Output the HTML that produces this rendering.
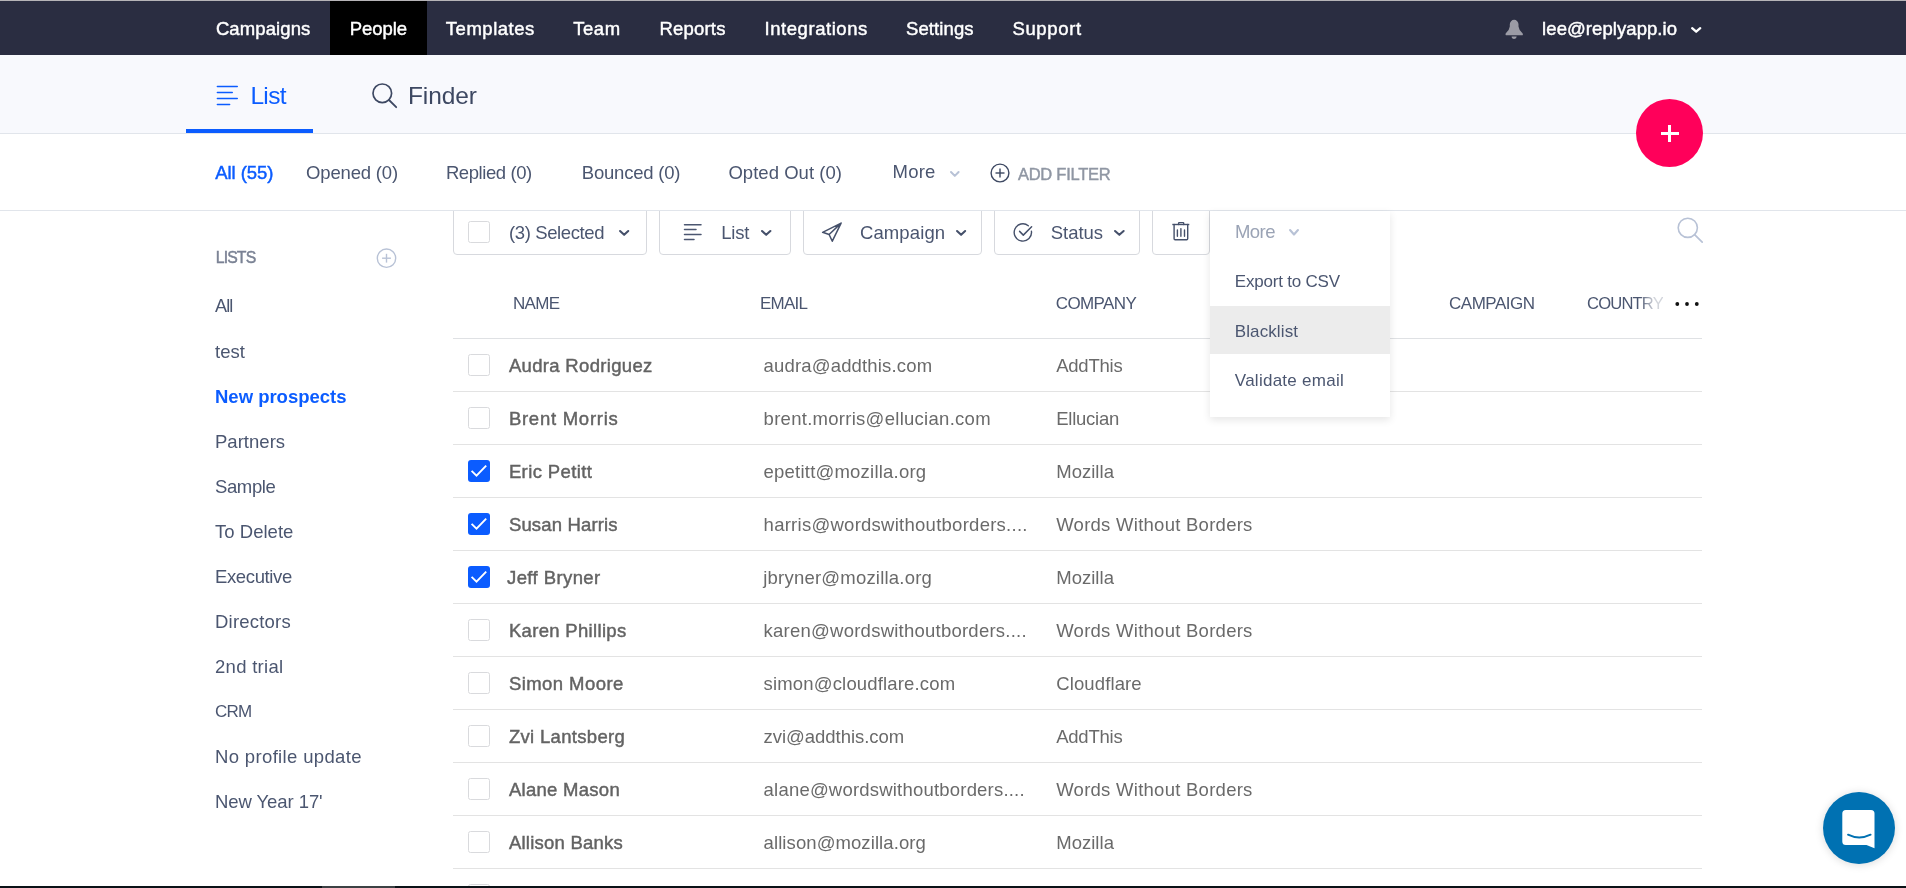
<!DOCTYPE html>
<html><head><meta charset="utf-8"><style>
html,body{margin:0;padding:0;width:1906px;height:888px;overflow:hidden;background:#fff;position:relative}
.a{position:absolute;box-sizing:content-box}
.t{position:absolute;white-space:pre;font-family:"Liberation Sans",sans-serif;line-height:normal}
#root{position:absolute;left:0;top:0;width:1906px;height:888px;overflow:hidden;will-change:transform}
</style></head><body><div id="root">
<div class="a" style="left:0;top:0;width:1906px;height:55px;background:#2a2d41"></div>
<div class="a" style="left:0;top:0;width:1906px;height:1px;background:#b6b4b7"></div>
<div class="a" style="left:330px;top:1px;width:97px;height:54px;background:#000"></div>
<svg class="a" style="left:1504px;top:19px" width="20" height="21" viewBox="0 0 20 21"><path d="M5.8 5.2A4.35 4.35 0 0 1 14.5 5.2L14.5 7.5Q14.8 11 18.5 14.3Q19.4 15.3 18.6 16.2L1.9 16.2Q1.0 15.3 1.8 14.3Q5.5 11 5.8 7.5Z" fill="#9b9ba5"/><path d="M7.6 17.6L12.7 17.6A2.55 2.4 0 0 1 7.6 17.6Z" fill="#9b9ba5"/></svg>
<svg class="a" style="left:1690.5px;top:26.8px;overflow:visible" width="10.4" height="6.3" viewBox="0 0 10.4 6.3"><polyline points="1.15,1.15 5.2,4.6899999999999995 9.25,1.15" fill="none" stroke="#ffffff" stroke-width="2.3" stroke-linecap="round" stroke-linejoin="round"/></svg>
<div class="a" style="left:0;top:55px;width:1906px;height:78px;background:#f8f9fd"></div>
<div class="a" style="left:0;top:133px;width:1906px;height:1px;background:#e1e5eb"></div>
<div class="a" style="left:186px;top:129px;width:127px;height:4px;background:#0b5cff"></div>
<svg class="a" style="left:216px;top:85px" width="23" height="21" viewBox="0 0 23 21"><g stroke="#0b5cff" stroke-width="1.5" stroke-linecap="round"><line x1="1.35" y1="1.5" x2="21.25" y2="1.5"/><line x1="1.35" y1="7.6" x2="16.25" y2="7.6"/><line x1="1.35" y1="13.5" x2="21.25" y2="13.5"/><line x1="1.35" y1="19.6" x2="13.65" y2="19.6"/></g></svg>
<svg class="a" style="left:371px;top:82px" width="27" height="27" viewBox="0 0 27 27"><circle cx="11.3" cy="11.3" r="9.3" fill="none" stroke="#3d4862" stroke-width="1.7"/><line x1="18" y1="18" x2="25.2" y2="25.2" stroke="#3d4862" stroke-width="1.8" stroke-linecap="round"/></svg>
<div class="a" style="left:0;top:210px;width:1906px;height:1px;background:#e1e5eb"></div>
<svg class="a" style="left:949.7px;top:171px;overflow:visible" width="9.6" height="6.3" viewBox="0 0 9.6 6.3"><polyline points="1.0,1.0 4.8,4.9 8.6,1.0" fill="none" stroke="#b8c2d6" stroke-width="2.0" stroke-linecap="round" stroke-linejoin="round"/></svg>
<svg class="a" style="left:990px;top:163px" width="20" height="20" viewBox="0 0 20 20"><circle cx="10" cy="10" r="8.9" fill="none" stroke="#3d4862" stroke-width="1.4"/><line x1="10" y1="5.5" x2="10" y2="14.5" stroke="#3d4862" stroke-width="1.4"/><line x1="5.5" y1="10" x2="14.5" y2="10" stroke="#3d4862" stroke-width="1.4"/></svg>
<div class="a" style="left:453px;top:210px;width:192px;height:43px;border:1px solid #d7d9de;border-radius:0 0 4px 4px;background:#fff"></div>
<div class="a" style="left:659px;top:210px;width:130px;height:43px;border:1px solid #d7d9de;border-radius:0 0 4px 4px;background:#fff"></div>
<div class="a" style="left:803px;top:210px;width:177px;height:43px;border:1px solid #d7d9de;border-radius:0 0 4px 4px;background:#fff"></div>
<div class="a" style="left:994px;top:210px;width:144px;height:43px;border:1px solid #d7d9de;border-radius:0 0 4px 4px;background:#fff"></div>
<div class="a" style="left:1152px;top:210px;width:56px;height:43px;border:1px solid #d7d9de;border-radius:0 0 4px 4px;background:#fff"></div>
<div class="a" style="left:0;top:210px;width:1906px;height:1px;background:#e1e5eb"></div>
<div class="a" style="left:468px;top:221px;width:20px;height:20px;border:1px solid #d9dadd;border-radius:2.5px;background:#fff"></div>
<svg class="a" style="left:619px;top:229.8px;overflow:visible" width="10.3" height="6.3" viewBox="0 0 10.3 6.3"><polyline points="1.05,1.05 5.15,4.83 9.25,1.05" fill="none" stroke="#45506a" stroke-width="2.1" stroke-linecap="round" stroke-linejoin="round"/></svg>
<svg class="a" style="left:683px;top:223px" width="20" height="19" viewBox="0 0 20 19"><g stroke="#4b5670" stroke-width="1.5" stroke-linecap="round"><line x1="1.5" y1="1.8" x2="18" y2="1.8"/><line x1="1.5" y1="6.4" x2="13" y2="6.4"/><line x1="1.5" y1="11.6" x2="18" y2="11.6"/><line x1="1.5" y1="16.4" x2="11" y2="16.4"/></g></svg>
<svg class="a" style="left:760.6px;top:229.8px;overflow:visible" width="10.4" height="6.3" viewBox="0 0 10.4 6.3"><polyline points="1.05,1.05 5.2,4.83 9.35,1.05" fill="none" stroke="#45506a" stroke-width="2.1" stroke-linecap="round" stroke-linejoin="round"/></svg>
<svg class="a" style="left:821px;top:221px" width="22" height="22" viewBox="0 0 22 22"><path d="M20.1 2.1 L1.6 11.3 L8.1 13.5 L11.3 20.2 Z M20.1 2.1 L8.1 13.5" fill="none" stroke="#45506a" stroke-width="1.5" stroke-linejoin="round" stroke-linecap="round"/></svg>
<svg class="a" style="left:956.4px;top:229.8px;overflow:visible" width="10.2" height="6.3" viewBox="0 0 10.2 6.3"><polyline points="1.05,1.05 5.1,4.83 9.149999999999999,1.05" fill="none" stroke="#45506a" stroke-width="2.1" stroke-linecap="round" stroke-linejoin="round"/></svg>
<svg class="a" style="left:1012px;top:221px" width="22" height="22" viewBox="0 0 22 22"><path d="M19.42 10.25 A8.65 8.65 0 1 1 16.32 4.75" fill="none" stroke="#45506a" stroke-width="1.4" stroke-linecap="round"/><polyline points="7.6,10.4 11.3,14.1 19.6,5.8" fill="none" stroke="#45506a" stroke-width="1.5" stroke-linecap="round" stroke-linejoin="round"/></svg>
<svg class="a" style="left:1114.3px;top:229.8px;overflow:visible" width="10.7" height="6.3" viewBox="0 0 10.7 6.3"><polyline points="1.05,1.05 5.35,4.83 9.649999999999999,1.05" fill="none" stroke="#45506a" stroke-width="2.1" stroke-linecap="round" stroke-linejoin="round"/></svg>
<svg class="a" style="left:1171px;top:221px" width="19" height="21" viewBox="0 0 19 21"><g fill="none" stroke="#45506a" stroke-width="1.4" stroke-linecap="round"><path d="M1.3 3.5h17" stroke-linecap="butt"/><path d="M7.6 3.5V2.2q0-.6.6-.6h3.9q.6 0 .6.6v1.3"/><path d="M3.1 3.5v14.2q0 1 1 1h11.6q1 0 1-1V3.5"/><path d="M6.4 9v6.3M9.9 7.6v7.7M13.5 9v6.3"/></g></svg>
<svg class="a" style="left:1677px;top:217px" width="27" height="27" viewBox="0 0 27 27"><circle cx="10.8" cy="10.8" r="9.6" fill="none" stroke="#b8c2d6" stroke-width="1.6"/><line x1="17.6" y1="17.6" x2="25.2" y2="25.2" stroke="#b8c2d6" stroke-width="1.7" stroke-linecap="round"/></svg>
<div class="a" style="left:453px;top:338px;width:1249px;height:1px;background:#dfe1e4"></div>
<div class="a" style="left:453px;top:391px;width:1249px;height:1px;background:#e3e3e3"></div>
<div class="a" style="left:453px;top:444px;width:1249px;height:1px;background:#e3e3e3"></div>
<div class="a" style="left:453px;top:497px;width:1249px;height:1px;background:#e3e3e3"></div>
<div class="a" style="left:453px;top:550px;width:1249px;height:1px;background:#e3e3e3"></div>
<div class="a" style="left:453px;top:603px;width:1249px;height:1px;background:#e3e3e3"></div>
<div class="a" style="left:453px;top:656px;width:1249px;height:1px;background:#e3e3e3"></div>
<div class="a" style="left:453px;top:709px;width:1249px;height:1px;background:#e3e3e3"></div>
<div class="a" style="left:453px;top:762px;width:1249px;height:1px;background:#e3e3e3"></div>
<div class="a" style="left:453px;top:815px;width:1249px;height:1px;background:#e3e3e3"></div>
<div class="a" style="left:453px;top:868px;width:1249px;height:1px;background:#e3e3e3"></div>
<div class="a" style="left:468px;top:354px;width:20px;height:20px;border:1px solid #d9dadd;border-radius:2.5px;background:#fff"></div>
<div class="a" style="left:468px;top:407px;width:20px;height:20px;border:1px solid #d9dadd;border-radius:2.5px;background:#fff"></div>
<div class="a" style="left:468px;top:460px;width:22px;height:22px;border-radius:3px;background:#0b5cff"></div><svg class="a" style="left:468px;top:460px" width="22" height="22" viewBox="0 0 22 22"><polyline points="3.6,10.9 8.5,15.6 18.2,5.7" fill="none" stroke="#fff" stroke-width="1.9" stroke-linecap="butt" stroke-linejoin="miter"/></svg>
<div class="a" style="left:468px;top:513px;width:22px;height:22px;border-radius:3px;background:#0b5cff"></div><svg class="a" style="left:468px;top:513px" width="22" height="22" viewBox="0 0 22 22"><polyline points="3.6,10.9 8.5,15.6 18.2,5.7" fill="none" stroke="#fff" stroke-width="1.9" stroke-linecap="butt" stroke-linejoin="miter"/></svg>
<div class="a" style="left:468px;top:566px;width:22px;height:22px;border-radius:3px;background:#0b5cff"></div><svg class="a" style="left:468px;top:566px" width="22" height="22" viewBox="0 0 22 22"><polyline points="3.6,10.9 8.5,15.6 18.2,5.7" fill="none" stroke="#fff" stroke-width="1.9" stroke-linecap="butt" stroke-linejoin="miter"/></svg>
<div class="a" style="left:468px;top:619px;width:20px;height:20px;border:1px solid #d9dadd;border-radius:2.5px;background:#fff"></div>
<div class="a" style="left:468px;top:672px;width:20px;height:20px;border:1px solid #d9dadd;border-radius:2.5px;background:#fff"></div>
<div class="a" style="left:468px;top:725px;width:20px;height:20px;border:1px solid #d9dadd;border-radius:2.5px;background:#fff"></div>
<div class="a" style="left:468px;top:778px;width:20px;height:20px;border:1px solid #d9dadd;border-radius:2.5px;background:#fff"></div>
<div class="a" style="left:468px;top:831px;width:20px;height:20px;border:1px solid #d9dadd;border-radius:2.5px;background:#fff"></div>
<div class="a" style="left:468px;top:884px;width:20px;height:20px;border:1px solid #d9dadd;border-radius:2.5px;background:#fff"></div>
<svg class="a" style="left:1673.8px;top:300.3px" width="28" height="8" viewBox="0 0 28 8"><circle cx="3.3" cy="4" r="1.9" fill="#111"/><circle cx="13" cy="4" r="1.9" fill="#111"/><circle cx="22.8" cy="4" r="1.9" fill="#111"/></svg>
<svg class="a" style="left:376px;top:248px" width="21" height="21" viewBox="0 0 21 21"><circle cx="10.5" cy="10.2" r="9.2" fill="none" stroke="#b8c2d6" stroke-width="1.4"/><line x1="10.5" y1="5.8" x2="10.5" y2="14.6" stroke="#b8c2d6" stroke-width="1.4"/><line x1="6.1" y1="10.2" x2="14.9" y2="10.2" stroke="#b8c2d6" stroke-width="1.4"/></svg>
<div class="a" style="left:1210px;top:211px;width:180px;height:206px;background:#fff;box-shadow:0 3px 8px rgba(0,0,0,.10)"></div>
<div class="a" style="left:1210px;top:306px;width:180px;height:48px;background:#ececec"></div>
<svg class="a" style="left:1289px;top:229.2px;overflow:visible" width="10" height="7" viewBox="0 0 10 7"><polyline points="1.05,1.05 5.0,5.53 8.95,1.05" fill="none" stroke="#b8c2d6" stroke-width="2.1" stroke-linecap="round" stroke-linejoin="round"/></svg>
<div class="a" style="left:1636px;top:99px;width:67px;height:68px;border-radius:50%;background:#ff005a"></div>
<div class="a" style="left:1660.5px;top:132px;width:18px;height:3px;background:#fff"></div>
<div class="a" style="left:1668px;top:125px;width:3px;height:17px;background:#fff"></div>
<div class="a" style="left:1823px;top:792px;width:72px;height:72px;border-radius:50%;background:#0071b2;box-shadow:0 1px 8px rgba(0,0,0,.15)"></div>
<svg class="a" style="left:1841px;top:809px" width="36" height="40" viewBox="0 0 36 40"><path d="M4.8 1h25.2a3.5 3.5 0 0 1 3.5 3.5V39.2l-8-3.2H4.8A3.5 3.5 0 0 1 1.3 32.5v-28A3.5 3.5 0 0 1 4.8 1z" fill="#fff"/><path d="M7 25.7q11.2 5.6 22.6 0" fill="none" stroke="#0071b2" stroke-width="1.9" stroke-linecap="round"/></svg>
<div class="a" style="left:0;top:886px;width:1906px;height:2px;background:#0b1217"></div>
<div class="a" style="left:322px;top:886px;width:73px;height:2px;background:#3c4144"></div>
<div class="t" style="left:215.90px;top:18.46px;font-size:18.5px;color:#ffffff;font-weight:normal;letter-spacing:0.111px;-webkit-text-stroke:0.45px #ffffff;">Campaigns</div>
<div class="t" style="left:349.70px;top:18.46px;font-size:18.5px;color:#ffffff;font-weight:normal;letter-spacing:-0.065px;-webkit-text-stroke:0.45px #ffffff;">People</div>
<div class="t" style="left:445.80px;top:18.46px;font-size:18.5px;color:#ffffff;font-weight:normal;letter-spacing:0.530px;-webkit-text-stroke:0.45px #ffffff;">Templates</div>
<div class="t" style="left:573.20px;top:18.46px;font-size:18.5px;color:#ffffff;font-weight:normal;letter-spacing:0.556px;-webkit-text-stroke:0.45px #ffffff;">Team</div>
<div class="t" style="left:659.40px;top:18.46px;font-size:18.5px;color:#ffffff;font-weight:normal;letter-spacing:0.208px;-webkit-text-stroke:0.45px #ffffff;">Reports</div>
<div class="t" style="left:764.50px;top:18.46px;font-size:18.5px;color:#ffffff;font-weight:normal;letter-spacing:0.558px;-webkit-text-stroke:0.45px #ffffff;">Integrations</div>
<div class="t" style="left:906.00px;top:18.46px;font-size:18.5px;color:#ffffff;font-weight:normal;letter-spacing:0.103px;-webkit-text-stroke:0.45px #ffffff;">Settings</div>
<div class="t" style="left:1012.40px;top:18.46px;font-size:18.5px;color:#ffffff;font-weight:normal;letter-spacing:0.676px;-webkit-text-stroke:0.45px #ffffff;">Support</div>
<div class="t" style="left:1542.10px;top:18.46px;font-size:18.5px;color:#ffffff;font-weight:normal;letter-spacing:0.069px;-webkit-text-stroke:0.45px #ffffff;">lee@replyapp.io</div>
<div class="t" style="left:250.40px;top:82.03px;font-size:24.5px;color:#0b5cff;font-weight:normal;letter-spacing:-0.666px;">List</div>
<div class="t" style="left:408.00px;top:82.03px;font-size:24.5px;color:#3d4862;font-weight:normal;letter-spacing:-0.131px;">Finder</div>
<div class="t" style="left:215.30px;top:161.56px;font-size:18.5px;color:#0b5cff;font-weight:normal;letter-spacing:-0.064px;-webkit-text-stroke:0.45px #0b5cff;">All (55)</div>
<div class="t" style="left:306.10px;top:161.56px;font-size:18.5px;color:#4b5670;font-weight:normal;letter-spacing:-0.179px;">Opened (0)</div>
<div class="t" style="left:445.90px;top:161.56px;font-size:18.5px;color:#4b5670;font-weight:normal;letter-spacing:-0.417px;">Replied (0)</div>
<div class="t" style="left:581.80px;top:161.56px;font-size:18.5px;color:#4b5670;font-weight:normal;letter-spacing:-0.212px;">Bounced (0)</div>
<div class="t" style="left:728.40px;top:161.56px;font-size:18.5px;color:#4b5670;font-weight:normal;letter-spacing:0.039px;">Opted Out (0)</div>
<div class="t" style="left:892.60px;top:161.26px;font-size:18.5px;color:#4b5670;font-weight:normal;letter-spacing:0.207px;">More</div>
<div class="t" style="left:1017.90px;top:164.77px;font-size:16.5px;color:#8f96a3;font-weight:normal;letter-spacing:-0.238px;-webkit-text-stroke:0.45px #8f96a3;">ADD FILTER</div>
<div class="t" style="left:509.00px;top:221.56px;font-size:18.5px;color:#4b5670;font-weight:normal;letter-spacing:-0.392px;">(3) Selected</div>
<div class="t" style="left:721.30px;top:221.56px;font-size:18.5px;color:#4b5670;font-weight:normal;letter-spacing:-0.256px;">List</div>
<div class="t" style="left:859.90px;top:221.56px;font-size:18.5px;color:#4b5670;font-weight:normal;letter-spacing:0.134px;">Campaign</div>
<div class="t" style="left:1050.70px;top:221.56px;font-size:18.5px;color:#4b5670;font-weight:normal;letter-spacing:-0.010px;">Status</div>
<div class="t" style="left:1234.90px;top:220.96px;font-size:18.5px;color:#9aa3b5;font-weight:normal;letter-spacing:-0.527px;">More</div>
<div class="t" style="left:1234.80px;top:271.62px;font-size:17px;color:#4b5670;font-weight:normal;letter-spacing:-0.208px;">Export to CSV</div>
<div class="t" style="left:1234.80px;top:321.92px;font-size:17px;color:#4b5670;font-weight:normal;letter-spacing:0.101px;">Blacklist</div>
<div class="t" style="left:1234.80px;top:371.01px;font-size:17px;color:#4b5670;font-weight:normal;letter-spacing:0.263px;">Validate email</div>
<div class="t" style="left:513.00px;top:294.01px;font-size:17px;color:#4b5670;font-weight:normal;letter-spacing:-0.710px;">NAME</div>
<div class="t" style="left:760.00px;top:294.01px;font-size:17px;color:#4b5670;font-weight:normal;letter-spacing:-0.775px;">EMAIL</div>
<div class="t" style="left:1055.80px;top:294.01px;font-size:17px;color:#4b5670;font-weight:normal;letter-spacing:-0.627px;">COMPANY</div>
<div class="t" style="left:1449.00px;top:294.01px;font-size:17px;color:#4b5670;font-weight:normal;letter-spacing:-0.489px;">CAMPAIGN</div>
<div class="t" style="left:1587.00px;top:294.38px;font-size:16.599999999999994px;color:#4b5670;font-weight:normal;letter-spacing:-0.826px;-webkit-mask-image:linear-gradient(90deg,#000 70%,rgba(0,0,0,.25) 88%);">COUNTRY</div>
<div class="t" style="left:215.80px;top:248.70px;font-size:15.8px;color:#7a8294;font-weight:normal;letter-spacing:-0.881px;-webkit-text-stroke:0.45px #7a8294;">LISTS</div>
<div class="t" style="left:215.00px;top:295.92px;font-size:18.099999999999994px;color:#4b5670;font-weight:normal;letter-spacing:-0.895px;">All</div>
<div class="t" style="left:215.00px;top:340.56px;font-size:18.5px;color:#4b5670;font-weight:normal;letter-spacing:0.038px;">test</div>
<div class="t" style="left:215.00px;top:385.56px;font-size:18.5px;color:#0b5cff;font-weight:bold;letter-spacing:-0.011px;">New prospects</div>
<div class="t" style="left:215.00px;top:430.56px;font-size:18.5px;color:#4b5670;font-weight:normal;letter-spacing:0.024px;">Partners</div>
<div class="t" style="left:215.00px;top:475.56px;font-size:18.5px;color:#4b5670;font-weight:normal;letter-spacing:-0.383px;">Sample</div>
<div class="t" style="left:215.00px;top:520.56px;font-size:18.5px;color:#4b5670;font-weight:normal;letter-spacing:0.030px;">To Delete</div>
<div class="t" style="left:215.00px;top:565.56px;font-size:18.5px;color:#4b5670;font-weight:normal;letter-spacing:-0.375px;">Executive</div>
<div class="t" style="left:215.00px;top:610.56px;font-size:18.5px;color:#4b5670;font-weight:normal;letter-spacing:0.212px;">Directors</div>
<div class="t" style="left:215.00px;top:655.56px;font-size:18.5px;color:#4b5670;font-weight:normal;letter-spacing:0.280px;">2nd trial</div>
<div class="t" style="left:215.00px;top:701.91px;font-size:16.99999999999998px;color:#4b5670;font-weight:normal;letter-spacing:-0.787px;">CRM</div>
<div class="t" style="left:215.00px;top:745.56px;font-size:18.5px;color:#4b5670;font-weight:normal;letter-spacing:0.351px;">No profile update</div>
<div class="t" style="left:215.00px;top:790.56px;font-size:18.5px;color:#4b5670;font-weight:normal;letter-spacing:-0.074px;">New Year 17'</div>
<div class="t" style="left:508.90px;top:355.16px;font-size:18.5px;color:#636363;font-weight:normal;letter-spacing:0.326px;-webkit-text-stroke:0.45px #636363;">Audra Rodriguez</div>
<div class="t" style="left:763.60px;top:355.16px;font-size:18.5px;color:#6a6a6a;font-weight:normal;letter-spacing:0.165px;">audra@addthis.com</div>
<div class="t" style="left:1056.20px;top:355.16px;font-size:18.5px;color:#6a6a6a;font-weight:normal;letter-spacing:-0.232px;">AddThis</div>
<div class="t" style="left:508.90px;top:408.16px;font-size:18.5px;color:#636363;font-weight:normal;letter-spacing:0.742px;-webkit-text-stroke:0.45px #636363;">Brent Morris</div>
<div class="t" style="left:763.60px;top:408.16px;font-size:18.5px;color:#6a6a6a;font-weight:normal;letter-spacing:0.278px;">brent.morris@ellucian.com</div>
<div class="t" style="left:1056.20px;top:408.16px;font-size:18.5px;color:#6a6a6a;font-weight:normal;letter-spacing:-0.250px;">Ellucian</div>
<div class="t" style="left:508.90px;top:461.16px;font-size:18.5px;color:#636363;font-weight:normal;letter-spacing:0.392px;-webkit-text-stroke:0.45px #636363;">Eric Petitt</div>
<div class="t" style="left:763.60px;top:461.16px;font-size:18.5px;color:#6a6a6a;font-weight:normal;letter-spacing:0.215px;">epetitt@mozilla.org</div>
<div class="t" style="left:1056.20px;top:461.16px;font-size:18.5px;color:#6a6a6a;font-weight:normal;letter-spacing:0.029px;">Mozilla</div>
<div class="t" style="left:508.90px;top:514.16px;font-size:18.5px;color:#636363;font-weight:normal;letter-spacing:0.161px;-webkit-text-stroke:0.45px #636363;">Susan Harris</div>
<div class="t" style="left:763.60px;top:514.16px;font-size:18.5px;color:#6a6a6a;font-weight:normal;letter-spacing:0.261px;">harris@wordswithoutborders....</div>
<div class="t" style="left:1056.20px;top:514.16px;font-size:18.5px;color:#6a6a6a;font-weight:normal;letter-spacing:0.264px;">Words Without Borders</div>
<div class="t" style="left:507.00px;top:567.16px;font-size:18.5px;color:#636363;font-weight:normal;letter-spacing:0.412px;-webkit-text-stroke:0.45px #636363;">Jeff Bryner</div>
<div class="t" style="left:763.26px;top:567.16px;font-size:18.5px;color:#6a6a6a;font-weight:normal;letter-spacing:0.211px;">jbryner@mozilla.org</div>
<div class="t" style="left:1056.20px;top:567.16px;font-size:18.5px;color:#6a6a6a;font-weight:normal;letter-spacing:0.029px;">Mozilla</div>
<div class="t" style="left:508.90px;top:620.16px;font-size:18.5px;color:#636363;font-weight:normal;letter-spacing:0.321px;-webkit-text-stroke:0.45px #636363;">Karen Phillips</div>
<div class="t" style="left:763.60px;top:620.16px;font-size:18.5px;color:#6a6a6a;font-weight:normal;letter-spacing:0.239px;">karen@wordswithoutborders....</div>
<div class="t" style="left:1056.20px;top:620.16px;font-size:18.5px;color:#6a6a6a;font-weight:normal;letter-spacing:0.264px;">Words Without Borders</div>
<div class="t" style="left:508.90px;top:673.16px;font-size:18.5px;color:#636363;font-weight:normal;letter-spacing:0.442px;-webkit-text-stroke:0.45px #636363;">Simon Moore</div>
<div class="t" style="left:763.60px;top:673.16px;font-size:18.5px;color:#6a6a6a;font-weight:normal;letter-spacing:0.162px;">simon@cloudflare.com</div>
<div class="t" style="left:1056.20px;top:673.16px;font-size:18.5px;color:#6a6a6a;font-weight:normal;letter-spacing:0.127px;">Cloudflare</div>
<div class="t" style="left:508.90px;top:726.16px;font-size:18.5px;color:#636363;font-weight:normal;letter-spacing:0.316px;-webkit-text-stroke:0.45px #636363;">Zvi Lantsberg</div>
<div class="t" style="left:763.60px;top:726.16px;font-size:18.5px;color:#6a6a6a;font-weight:normal;letter-spacing:-0.040px;">zvi@addthis.com</div>
<div class="t" style="left:1056.20px;top:726.16px;font-size:18.5px;color:#6a6a6a;font-weight:normal;letter-spacing:-0.232px;">AddThis</div>
<div class="t" style="left:508.90px;top:779.16px;font-size:18.5px;color:#636363;font-weight:normal;letter-spacing:0.285px;-webkit-text-stroke:0.45px #636363;">Alane Mason</div>
<div class="t" style="left:763.60px;top:779.16px;font-size:18.5px;color:#6a6a6a;font-weight:normal;letter-spacing:0.204px;">alane@wordswithoutborders....</div>
<div class="t" style="left:1056.20px;top:779.16px;font-size:18.5px;color:#6a6a6a;font-weight:normal;letter-spacing:0.264px;">Words Without Borders</div>
<div class="t" style="left:508.90px;top:832.16px;font-size:18.5px;color:#636363;font-weight:normal;letter-spacing:0.234px;-webkit-text-stroke:0.45px #636363;">Allison Banks</div>
<div class="t" style="left:763.60px;top:832.16px;font-size:18.5px;color:#6a6a6a;font-weight:normal;letter-spacing:0.085px;">allison@mozilla.org</div>
<div class="t" style="left:1056.20px;top:832.16px;font-size:18.5px;color:#6a6a6a;font-weight:normal;letter-spacing:0.029px;">Mozilla</div>
</div></body></html>
